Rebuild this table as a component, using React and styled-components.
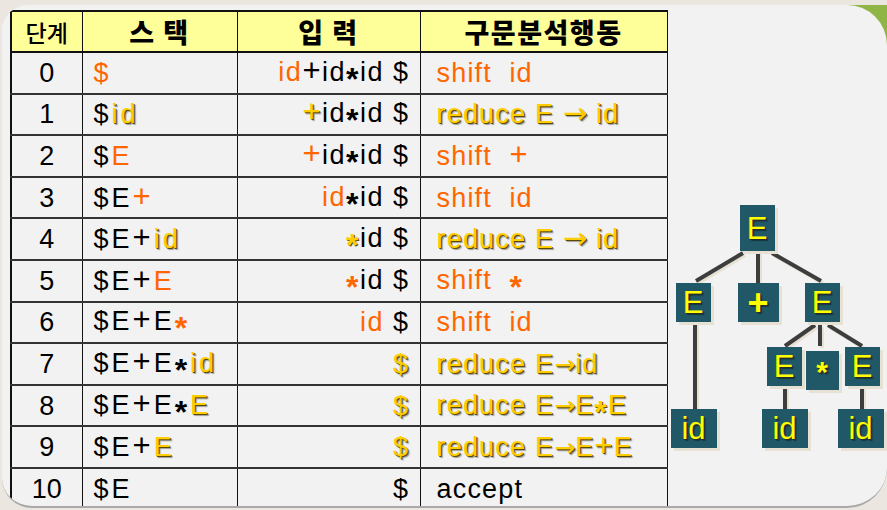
import React from "react";
import styled, { createGlobalStyle } from "styled-components";

const Global = createGlobalStyle`
  html, body { margin: 0; padding: 0; }
  body {
    width: 887px;
    height: 510px;
    overflow: hidden;
    background: #ebe7e0;
    font-family: "Liberation Sans", Arial, "Noto Sans CJK KR", sans-serif;
  }
`;

const Page = styled.div`
  position: relative;
  width: 887px;
  height: 510px;
  &::before {
    content: "";
    position: absolute;
    top: 0;
    right: 0;
    width: 150px;
    height: 60px;
    background: #8fb545;
    border-top-left-radius: 30px;
  }
`;

const Panel = styled.div`
  position: relative;
  margin: 5px 0 0 2px;
  height: 503px;
  background: #f2f2f2;
  border-radius: 26px 40px 40px 30px;
  border-bottom: 2px solid #a9a9a9;
  display: flex;
  align-items: flex-start;
  padding: 5px 0 0 8px;
  box-sizing: border-box;
  overflow: hidden;
`;

const Table = styled.table`
  border-collapse: collapse;
  table-layout: fixed;
  width: 656px;
  flex: none;
`;

const HeadRow = styled.tr`
  height: 41px;
`;

const HeadCell = styled.th`
  background: #ffff99;
  padding: 0;
  border: 1px solid #111;
  border-top-width: 2px;
  border-bottom-width: 2px;
  font-family: "Noto Sans CJK KR", "Liberation Sans", sans-serif;
  font-size: ${(p) => (p.$light ? "23px" : "27px")};
  font-weight: ${(p) => (p.$light ? 500 : 900)};
  letter-spacing: ${(p) => (p.$light ? "0" : "1.5px")};
  line-height: 34px;
  color: #000;
  text-align: center;
  white-space: pre;
  &:first-child { border-left-width: 2px; }
`;

const Row = styled.tr`
  height: 41.6px;
`;

const Cell = styled.td`
  padding: ${(p) => p.$pad || "0"};
  border-left: 1px solid #111;
  border-right: 1px solid #111;
  border-bottom: 2px solid #333;
  font-size: 27px;
  letter-spacing: ${(p) => p.$ls || "1px"};
  color: #000;
  text-align: ${(p) => p.$align || "left"};
  white-space: pre;
  vertical-align: middle;
  line-height: 30px;
  &:first-child { border-left-width: 2px; }
`;

const color = (c) => (c === "o" ? "#ff6600" : c === "y" ? "#ffcc00" : "#000");
const yShadow = "1px 1px 0 #5b4b00, 2px 2px 1px rgba(0,0,0,0.35)";

const Tok = styled.span`
  color: ${(p) => color(p.$c)};
  text-shadow: ${(p) => (p.$c === "y" ? yShadow : "none")};
`;

const Star = styled.span`
  display: inline-block;
  font-weight: 700;
  font-size: 32px;
  line-height: 20px;
  vertical-align: -9px;
  color: ${(p) => color(p.$c)};
  text-shadow: ${(p) => (p.$c === "y" ? "1px 1px 0 #5b4b00" : "none")};
`;

const Plus = styled.span`
  font-size: 31px;
  line-height: 20px;
  color: ${(p) => (p.$c ? color(p.$c) : "inherit")};
  text-shadow: ${(p) => (p.$c === "y" ? yShadow : "inherit")};
`;

const Arrow = styled.span`
  font-family: "DejaVu Sans", sans-serif;
  font-size: ${(p) => (p.$wide ? "29px" : "25px")};
  line-height: 20px;
  letter-spacing: 0;
`;

const Tree = styled.div`
  position: relative;
  flex: none;
  width: 221px;
  height: 470px;
`;

const Lines = styled.svg`
  position: absolute;
  left: 0;
  top: 0;
  width: 221px;
  height: 470px;
`;

const Node = styled.div`
  position: absolute;
  display: flex;
  align-items: center;
  justify-content: center;
  box-sizing: border-box;
  background: #215867;
  box-shadow: 3px 3px 0 #e6e1d3;
  color: #ffff00;
  font-family: "Liberation Sans", Arial, sans-serif;
  font-size: ${(p) => p.$fs || 31}px;
  font-weight: ${(p) => (p.$bold ? 700 : 400)};
  text-shadow: 1px 1px 0 #2b2b2b, 2px 2px 1px rgba(0,0,0,0.4);
  line-height: 1;
`;

const O = (t) => <Tok $c="o">{t}</Tok>;
const Y = (t) => <Tok $c="y">{t}</Tok>;
const S = (c) => <Star $c={c}>*</Star>;
const P = (c) => <Plus $c={c}>+</Plus>;
const A = (wide) => <Arrow $wide={wide}>→</Arrow>;

const rows = [
  ["0", <>{O("$")}</>, <>{O("id")}{P()}id{S()}id $</>, <>{O("shift  id")}</>],
  ["1", <>${Y("id")}</>, <>{P("y")}id{S()}id $</>, <Tok $c="y">reduce E {A(true)} id</Tok>],
  ["2", <>${O("E")}</>, <>{P("o")}id{S()}id $</>, <Tok $c="o">shift  <Plus>+</Plus></Tok>],
  ["3", <>$E{P("o")}</>, <>{O("id")}{S()}id $</>, <>{O("shift  id")}</>],
  ["4", <>$E{P()}{Y("id")}</>, <>{S("y")}id $</>, <Tok $c="y">reduce E {A(true)} id</Tok>],
  ["5", <>$E{P()}{O("E")}</>, <>{S("o")}id $</>, <Tok $c="o">shift  <Star $c="o">*</Star></Tok>],
  ["6", <>$E{P()}E{S("o")}</>, <>{O("id")} $</>, <>{O("shift  id")}</>],
  ["7", <>$E{P()}E{S()}{Y("id")}</>, <>{Y("$")}</>, <Tok $c="y">reduce E{A()}id</Tok>],
  ["8", <>$E{P()}E{S()}{Y("E")}</>, <>{Y("$")}</>, <Tok $c="y">reduce E{A()}E<Star $c="y">*</Star>E</Tok>],
  ["9", <>$E{P()}{Y("E")}</>, <>{Y("$")}</>, <Tok $c="y">reduce E{A()}E<Plus>+</Plus>E</Tok>],
  ["10", <>$E</>, <>$</>, <>accept</>],
];

const nodes = [
  { t: "E", x: 72, y: 195, w: 35, h: 46 },
  { t: "E", x: 8, y: 273, w: 35, h: 39 },
  { t: "+", x: 70, y: 273, w: 41, h: 39, bold: true, fs: 36 },
  { t: "E", x: 137, y: 273, w: 35, h: 39 },
  { t: "E", x: 99, y: 337, w: 35, h: 39 },
  { t: "*", x: 138, y: 341, w: 33, h: 39, bold: true, fs: 30, top: true },
  { t: "E", x: 177, y: 337, w: 35, h: 39 },
  { t: "id", x: 3, y: 399, w: 46, h: 39 },
  { t: "id", x: 94, y: 399, w: 46, h: 39 },
  { t: "id", x: 170, y: 399, w: 46, h: 39 },
];

const edges = [
  [75, 243, 28, 271],
  [90, 242, 90, 273],
  [104, 243, 153, 271],
  [27, 312, 27, 400],
  [147, 315, 117, 336],
  [152, 315, 152, 336],
  [160, 315, 194, 336],
  [117, 376, 117, 399],
  [194, 376, 194, 399],
];

export default function App() {
  return (
    <>
      <Global />
      <Page>
        <Panel>
          <Table>
            <colgroup>
              <col style={{ width: 71 }} />
              <col style={{ width: 155 }} />
              <col style={{ width: 183 }} />
              <col style={{ width: 247 }} />
            </colgroup>
            <thead>
              <HeadRow>
                <HeadCell $light>단계</HeadCell>
                <HeadCell>스 택</HeadCell>
                <HeadCell>입 력</HeadCell>
                <HeadCell>구문분석행동</HeadCell>
              </HeadRow>
            </thead>
            <tbody>
              {rows.map((r) => (
                <Row key={r[0]}>
                  <Cell $align="center" $ls="0">{r[0]}</Cell>
                  <Cell $pad="0 0 0 11px" $ls="3px">{r[1]}</Cell>
                  <Cell $align="right" $pad="0 10px 0 0" $ls="1.5px">{r[2]}</Cell>
                  <Cell $pad="0 0 0 16px" $ls="1.2px">{r[3]}</Cell>
                </Row>
              ))}
            </tbody>
          </Table>
          <Tree>
            <Lines viewBox="0 0 221 470">
              {edges.map((e, i) => (
                <line key={"s" + i} x1={e[0] + 2} y1={e[1] + 2} x2={e[2] + 2} y2={e[3] + 2} stroke="#e6e1d3" strokeWidth="4" />
              ))}
              {edges.map((e, i) => (
                <line key={i} x1={e[0]} y1={e[1]} x2={e[2]} y2={e[3]} stroke="#3d3d3d" strokeWidth="4" />
              ))}
            </Lines>
            {nodes.map((n, i) => (
              <Node
                key={i}
                $bold={n.bold}
                $fs={n.fs}
                style={{
                  left: n.x,
                  top: n.y,
                  width: n.w,
                  height: n.h,
                  alignItems: n.top ? "flex-start" : "center",
                  paddingTop: n.top ? 6 : 0,
                }}
              >
                {n.t}
              </Node>
            ))}
          </Tree>
        </Panel>
      </Page>
    </>
  );
}
